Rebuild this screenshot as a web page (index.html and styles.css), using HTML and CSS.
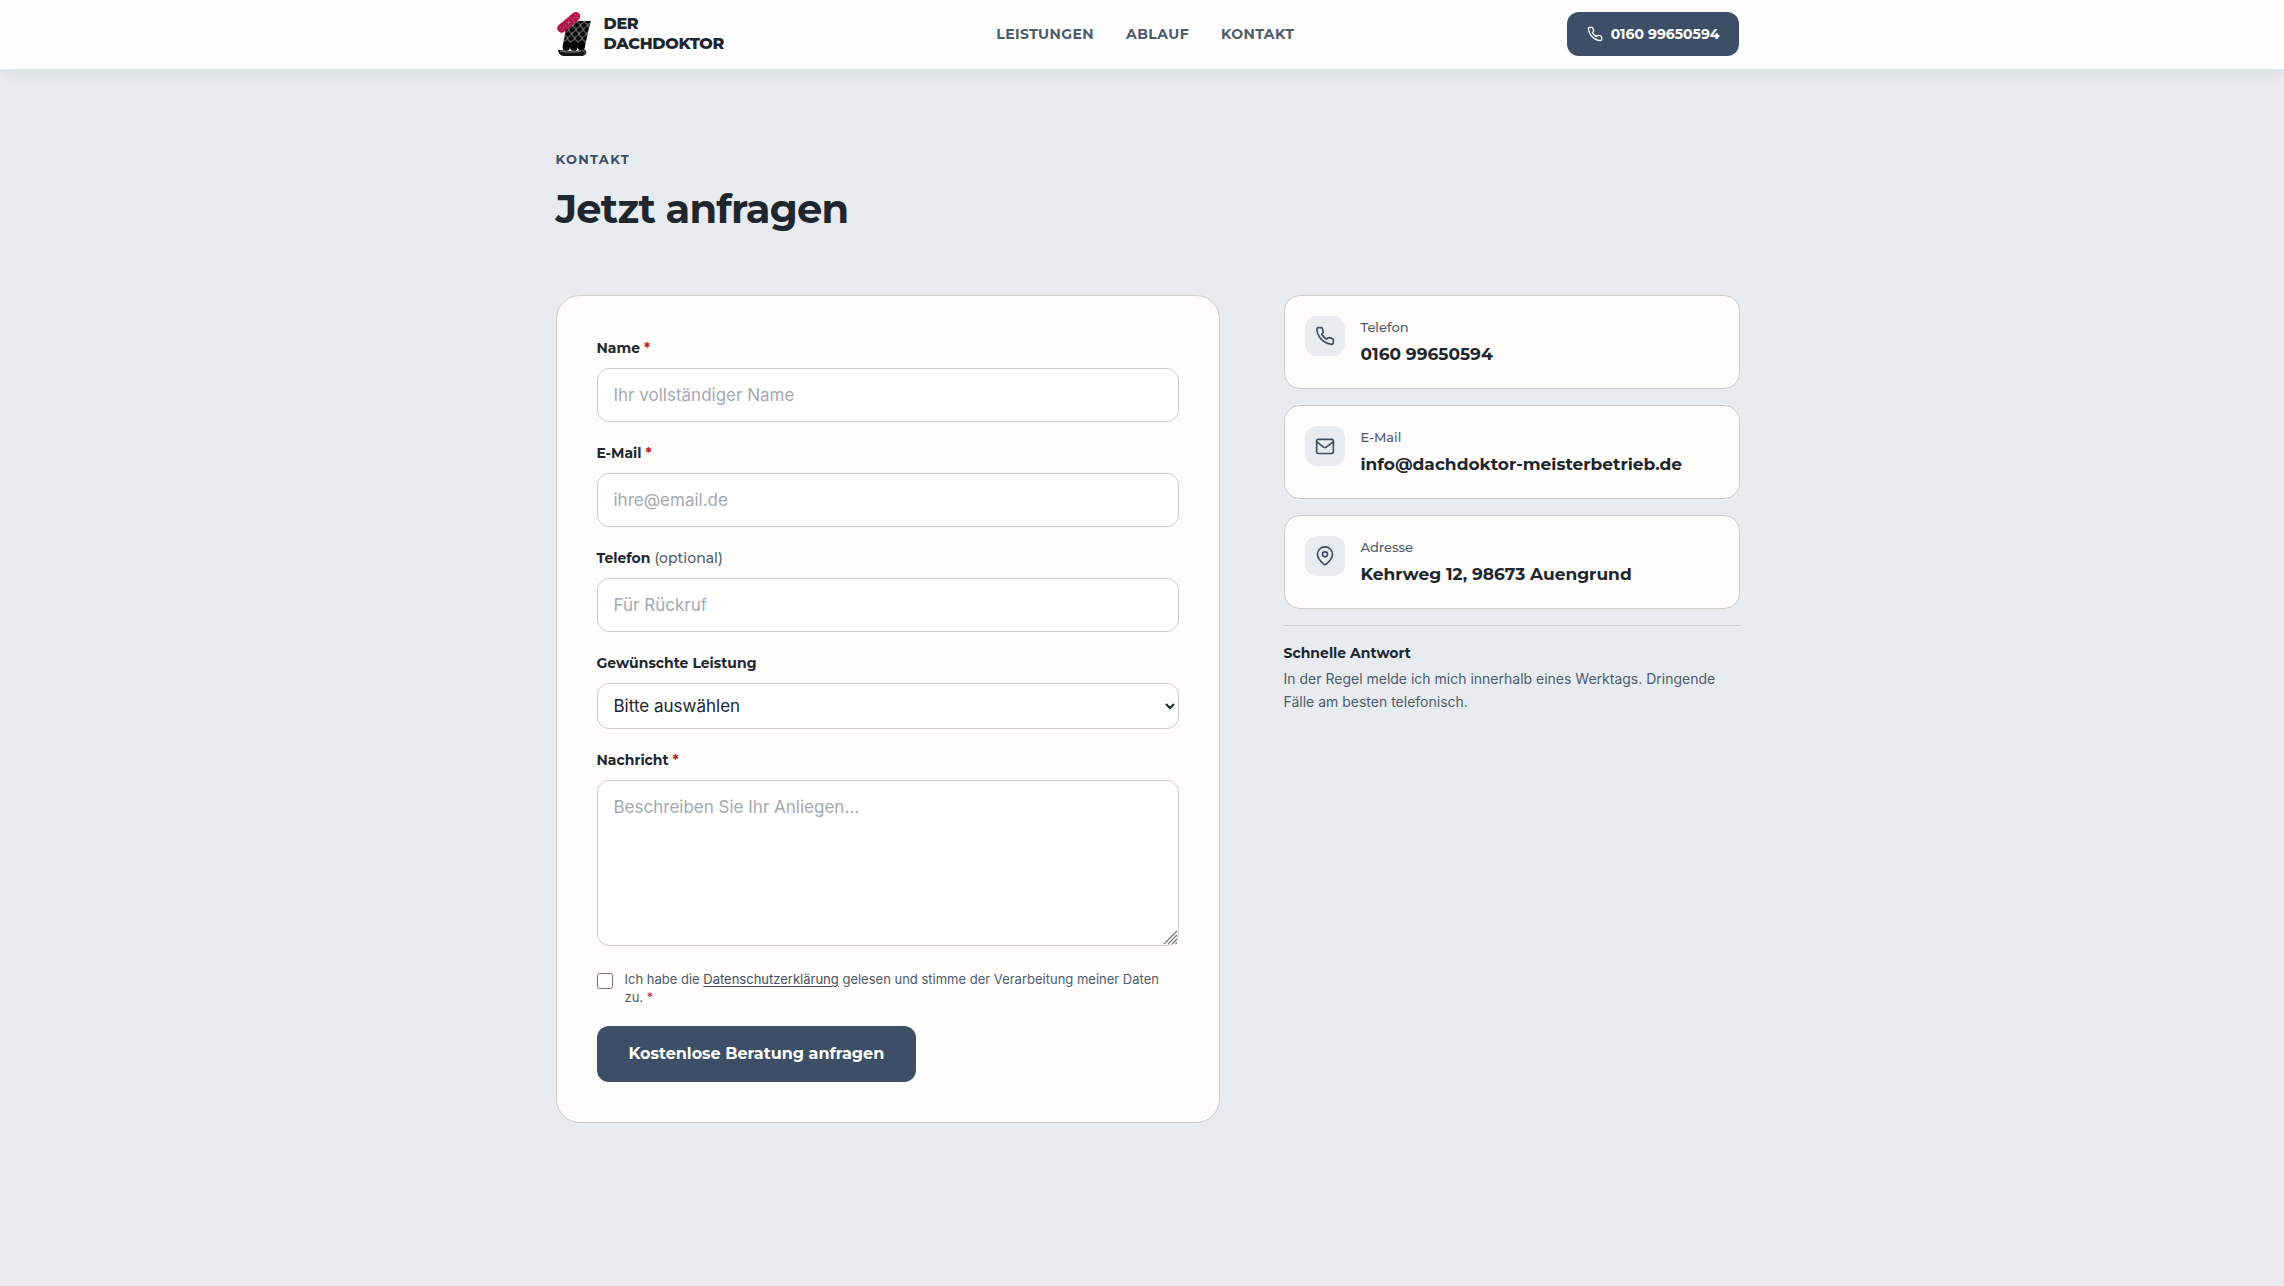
FILE: index.html
```html
<!DOCTYPE html>
<html lang="de">
<head>
<meta charset="utf-8">
<meta name="viewport" content="width=device-width, initial-scale=1">
<title>Kontakt – Der Dachdoktor</title>
<link rel="stylesheet" href="styles.css">
</head>
<body>
<header class="site-header">
  <div class="container header-inner">
    <a class="logo" href="#">
      <svg class="logo-mark" viewBox="48 33 108 138" aria-hidden="true">
        <defs>
          <clipPath id="roof"><path d="M84 62H153C146 84 141 112 135 138A11 12 0 0 1 113 140A11 12 0 0 1 90 140A11 12 0 0 1 67 140C73 120 76 98 78 66Z"/></clipPath>
          <pattern id="tiles" width="22" height="26" patternUnits="userSpaceOnUse" patternTransform="translate(68 60) skewX(-8)">
            <path d="M0 0Q1 11 11 13Q21 11 22 0M11 13Q10 24 0 26M11 13Q12 24 22 26" fill="none" stroke="#b9bbbd" stroke-width="2"/>
          </pattern>
        </defs>
        <g clip-path="url(#roof)">
          <rect x="60" y="55" width="100" height="100" fill="#050505"/>
          <rect x="60" y="55" width="100" height="72" fill="url(#tiles)"/>
        </g>
        <path d="M54 150H64C85 154 112 155 122 150C130 144 140 151 139 158C137 165 130 168 122 168H72C60 167 55 160 54 150Z" fill="#151515"/>
        <path d="M60 153C85 157 112 158 123 153" fill="none" stroke="#85898c" stroke-width="3"/>
        <path d="M127 151q7 2 6 8" fill="none" stroke="#a9acae" stroke-width="2"/>
        <g transform="rotate(-40 86 67)">
          <rect x="45" y="54" width="82" height="26" rx="13" fill="#b5114b"/>
          <rect x="73" y="56" width="26" height="22" rx="3" fill="#a30c40" stroke="#dd6c93" stroke-width="1.5"/>
          <path d="M80 62l12 10M92 62l-12 10" stroke="#dd6c93" stroke-width="2"/>
          <g fill="#e58aa9"><circle cx="57" cy="62" r="1.5"/><circle cx="64" cy="67" r="1.5"/><circle cx="57" cy="72" r="1.5"/><circle cx="115" cy="62" r="1.5"/><circle cx="108" cy="67" r="1.5"/><circle cx="115" cy="72" r="1.5"/></g>
        </g>
      </svg>
      <span class="logo-text">DER<br>DACHDOKTOR</span>
    </a>
    <nav class="nav" aria-label="Hauptnavigation">
      <a href="#leistungen">LEISTUNGEN</a>
      <a href="#ablauf">ABLAUF</a>
      <a href="#kontakt">KONTAKT</a>
    </nav>
    <a class="call" href="tel:+4916099650594">
      <svg class="icon icon-small" viewBox="0 0 24 24" aria-hidden="true"><path d="M22 16.92v3a2 2 0 0 1-2.18 2 19.79 19.79 0 0 1-8.63-3.07 19.5 19.5 0 0 1-6-6 19.79 19.79 0 0 1-3.07-8.67A2 2 0 0 1 4.11 2h3a2 2 0 0 1 2 1.72 12.84 12.84 0 0 0 .7 2.81 2 2 0 0 1-.45 2.11L8.09 9.91a16 16 0 0 0 6 6l1.27-1.27a2 2 0 0 1 2.11-.45 12.84 12.84 0 0 0 2.81.7A2 2 0 0 1 22 16.92z"/></svg>
      0160 99650594
    </a>
  </div>
</header>

<main class="page">
  <section class="container contact" id="kontakt">
    <p class="eyebrow">KONTAKT</p>
    <h1 class="title">Jetzt anfragen</h1>
    <div class="columns">
      <form class="card form">
        <div class="field">
          <label for="name">Name <span class="required">*</span></label>
          <input class="control" id="name" type="text" placeholder="Ihr vollständiger Name">
        </div>
        <div class="field">
          <label for="email">E-Mail <span class="required">*</span></label>
          <input class="control" id="email" type="email" placeholder="ihre@email.de">
        </div>
        <div class="field">
          <label for="phone">Telefon <span class="optional">(optional)</span></label>
          <input class="control" id="phone" type="tel" placeholder="Für Rückruf">
        </div>
        <div class="field">
          <label for="service">Gewünschte Leistung</label>
          <select class="control control-select" id="service"><option>Bitte auswählen</option></select>
        </div>
        <div class="field">
          <label for="message">Nachricht <span class="required">*</span></label>
          <textarea class="control control-area" id="message" placeholder="Beschreiben Sie Ihr Anliegen..."></textarea>
        </div>
        <div class="consent">
          <input id="consent" type="checkbox">
          <label for="consent">Ich habe die <a href="#datenschutz">Datenschutzerklärung</a> gelesen und stimme der Verarbeitung meiner Daten zu. <span class="required">*</span></label>
        </div>
        <button class="submit" type="submit">Kostenlose Beratung anfragen</button>
      </form>

      <aside class="info">
        <a class="card info-card" href="tel:+4916099650594">
          <span class="icon-box"><svg class="icon" viewBox="0 0 24 24" aria-hidden="true"><path d="M22 16.92v3a2 2 0 0 1-2.18 2 19.79 19.79 0 0 1-8.63-3.07 19.5 19.5 0 0 1-6-6 19.79 19.79 0 0 1-3.07-8.67A2 2 0 0 1 4.11 2h3a2 2 0 0 1 2 1.72 12.84 12.84 0 0 0 .7 2.81 2 2 0 0 1-.45 2.11L8.09 9.91a16 16 0 0 0 6 6l1.27-1.27a2 2 0 0 1 2.11-.45 12.84 12.84 0 0 0 2.81.7A2 2 0 0 1 22 16.92z"/></svg></span>
          <span class="info-text"><span class="info-label">Telefon</span><strong class="info-value">0160 99650594</strong></span>
        </a>
        <a class="card info-card" href="mailto:info@dachdoktor-meisterbetrieb.de">
          <span class="icon-box"><svg class="icon" viewBox="0 0 24 24" aria-hidden="true"><rect x="2" y="4" width="20" height="17" rx="2"/><path d="M2 7l8.97 6.7a1.94 1.94 0 0 0 2.06 0L22 7"/></svg></span>
          <span class="info-text"><span class="info-label">E-Mail</span><strong class="info-value">info@dachdoktor-meisterbetrieb.de</strong></span>
        </a>
        <div class="card info-card">
          <span class="icon-box"><svg class="icon" viewBox="0 0 24 24" aria-hidden="true"><path d="M21 10c0 5-5.5 10.2-7.4 11.8a2.5 2.5 0 0 1-3.200 0C8.500 20.200 3 15 3 10a9 9 0 0 1 18 0z"/><circle cx="12" cy="10" r="3"/></svg></span>
          <span class="info-text"><span class="info-label">Adresse</span><strong class="info-value">Kehrweg 12, 98673 Auengrund</strong></span>
        </div>
        <div class="reply">
          <h2>Schnelle Antwort</h2>
          <p>In der Regel melde ich mich innerhalb eines Werktags. Dringende Fälle am besten telefonisch.</p>
        </div>
      </aside>
    </div>
  </section>
</main>
</body>
</html>
```
FILE: styles.css
```css
:root {
  --navy: #3d4f66;
  --ink: #20262e;
  --muted: #4f5b6b;
  --line: #cccdc8;
  --mist: #e8ecf1;
  --paper: #fefdfb;
  --heading: Montserrat, Inter, sans-serif;
}

* { box-sizing: border-box; }

body {
  margin: 0;
  background: var(--mist);
  color: var(--ink);
  font-family: Inter, sans-serif;
  font-size: 16px;
}

a { color: inherit; text-decoration: none; }

.container {
  width: 100%;
  max-width: 1232px;
  margin: 0 auto;
  padding: 0 24px;
}

.site-header, .page { padding-left: 11px; }

.site-header {
  background: #fefefe;
  box-shadow: 0 2px 14px rgba(32, 38, 46, 0.1);
}

.header-inner {
  display: flex;
  align-items: center;
  justify-content: space-between;
  min-height: 69px;
  padding-bottom: 2px;
}

.logo { display: flex; align-items: center; gap: 12px; }
.logo-mark { width: 36px; height: 46px; }
.logo-text {
  font: 800 16px/20px var(--heading);
  letter-spacing: -0.02em;
}

.nav {
  display: flex;
  gap: 32px;
  color: var(--muted);
  font: 700 14px/24px var(--heading);
  letter-spacing: 0.03em;
}

.call {
  display: flex;
  align-items: center;
  gap: 8px;
  height: 44px;
  padding: 0 20px;
  border-radius: 12px;
  background: var(--navy);
  color: #fff;
  font: 700 14px/24px var(--heading);
}

.icon {
  width: 20px;
  height: 20px;
  fill: none;
  stroke: currentColor;
  stroke-width: 2;
  stroke-linecap: round;
  stroke-linejoin: round;
}
.icon-small { width: 16px; height: 16px; }

.contact { padding-top: 80px; padding-bottom: 80px; }

.eyebrow {
  margin: 0 0 16px;
  color: var(--navy);
  font: 700 13px/20px var(--heading);
  letter-spacing: 0.1em;
}

.title {
  margin: 0 0 62px;
  font: 700 40px/48px var(--heading);
  letter-spacing: -0.02em;
}

.columns {
  display: grid;
  grid-template-columns: 83fr 57fr;
  gap: 64px;
  align-items: start;
}

.card {
  border: 1px solid var(--line);
  background: var(--paper);
}

.form {
  display: flex;
  flex-direction: column;
  gap: 20px;
  padding: 41px 40px 40px;
  border-radius: 24px;
}

.field { display: flex; flex-direction: column; gap: 8px; }
.field label { font: 700 14px/23px var(--heading); }
.field .optional { font-weight: 500; color: var(--muted); }
.required { color: #b3262e; }

.control {
  width: 100%;
  height: 54px;
  padding: 14px 16px;
  border: 1px solid var(--line);
  border-radius: 12px;
  background: #fff;
  color: var(--ink);
  font: 400 17px/24px Inter, sans-serif;
}
.control::placeholder { color: #a4a9b1; opacity: 1; }
.control-select { height: 46px; padding: 0 12px; }
.control-area { height: 166px; resize: vertical; }
.control-area::-webkit-resizer {
  background: url("data:image/svg+xml,%3Csvg xmlns='http://www.w3.org/2000/svg' viewBox='0 0 15 15'%3E%3Cpath d='M1 14L14 1M5 14L14 5M9 14L14 9M12.500 14L14 12.500' stroke='%23777' stroke-width='1.200'/%3E%3C/svg%3E") center / 15px 15px no-repeat;
}

.consent {
  display: flex;
  align-items: flex-start;
  gap: 12px;
  padding-top: 4px;
  color: var(--muted);
  font-size: 13px;
  line-height: 18px;
}
.consent input { flex: none; width: 16px; height: 16px; margin: 3px 0 0; }
.consent a { text-decoration: underline; text-underline-offset: 2px; color: var(--navy); }

.submit {
  align-self: flex-start;
  height: 56px;
  padding: 0 32px;
  border: 0;
  border-radius: 12px;
  background: var(--navy);
  color: #fff;
  font: 700 16px/24px var(--heading);
}

.info { display: flex; flex-direction: column; gap: 16px; }

.info-card {
  display: flex;
  gap: 16px;
  padding: 20px;
  border-radius: 16px;
}
.icon-box {
  display: grid;
  flex: none;
  place-items: center;
  width: 40px;
  height: 40px;
  border-radius: 12px;
  background: var(--mist);
  color: var(--navy);
}
.info-text { display: flex; flex-direction: column; gap: 2px; }
.info-label { color: var(--muted); font: 500 13px/22px var(--heading); }
.info-value { font: 700 17px/28px var(--heading); }

.reply { padding-top: 15px; border-top: 1px solid var(--line); }
.reply h2 { margin: 0 0 2px; font: 700 14px/24px var(--heading); }
.reply p { margin: 0; color: var(--muted); font-size: 14px; line-height: 23px; }
```
